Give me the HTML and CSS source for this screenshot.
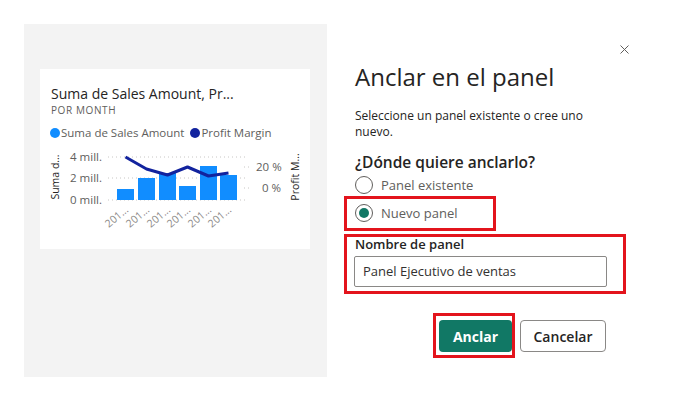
FILE: index.html
```html
<!DOCTYPE html>
<html lang="es">
<head>
<meta charset="utf-8">
<title>Anclar en el panel</title>
<link rel="stylesheet" href="styles.css">
</head>
<body>
<div class="page">
  <section class="preview">
    <div class="card">
      <div class="card-title">Suma de Sales Amount, Pr...</div>
      <div class="card-sub">POR MONTH</div>
      <div class="legend">
        <span class="dot dot-sales"></span><span class="legend-label">Suma de Sales Amount</span>
        <span class="dot dot-profit"></span><span class="legend-label">Profit Margin</span>
      </div>
      <svg class="chart" width="270" height="104" viewBox="0 0 270 104">
        <g class="grid">
          <line x1="68" y1="12" x2="208" y2="12"/>
          <line x1="68" y1="33" x2="208" y2="33"/>
          <line x1="68" y1="55" x2="208" y2="55"/>
          <line x1="204" y1="22" x2="212" y2="22"/>
          <line x1="204" y1="43" x2="212" y2="43"/>
        </g>
        <g class="axis-left">
          <text x="62" y="16">4 mill.</text>
          <text x="62" y="37">2 mill.</text>
          <text x="62" y="59">0 mill.</text>
        </g>
        <g class="axis-right">
          <text x="216" y="26">20 %</text>
          <text x="222" y="47">0 %</text>
        </g>
        <text class="axis-title" transform="translate(19 32) rotate(-90)">Suma d...</text>
        <text class="axis-title" transform="translate(259 32) rotate(-90)">Profit M...</text>
        <g class="bars">
          <rect x="77" y="44" width="17" height="11"/>
          <rect x="98" y="33" width="17" height="22"/>
          <rect x="119" y="28" width="17" height="27"/>
          <rect x="139" y="41" width="17" height="14"/>
          <rect x="160" y="21" width="17" height="34"/>
          <rect x="180" y="30" width="17" height="25"/>
        </g>
        <polyline class="line" points="85.5,12 106.5,24 127.5,30 147.5,22 168.5,31 188.5,28"/>
        <g class="xlabels">
          <text transform="translate(89 66) rotate(-40)">201...</text>
          <text transform="translate(110 66) rotate(-40)">201...</text>
          <text transform="translate(131 66) rotate(-40)">201...</text>
          <text transform="translate(151 66) rotate(-40)">201...</text>
          <text transform="translate(172 66) rotate(-40)">201...</text>
          <text transform="translate(192 66) rotate(-40)">201...</text>
        </g>
      </svg>
    </div>
  </section>

  <section class="dialog">
    <div class="close-row">
      <button class="close" aria-label="Cerrar">
        <svg width="9" height="9" viewBox="0 0 9 9"><path d="M0.5 0.5 L8.5 8.5 M8.5 0.5 L0.5 8.5"/></svg>
      </button>
    </div>
    <h1 class="title">Anclar en el panel</h1>
    <p class="desc">Seleccione un panel existente o cree uno nuevo.</p>
    <h2 class="question">¿Dónde quiere anclarlo?</h2>
    <label class="radio-row radio-first">
      <span class="radio"></span><span class="radio-label">Panel existente</span>
    </label>
    <div class="hl hl-radio">
      <label class="radio-row">
        <span class="radio checked"></span><span class="radio-label">Nuevo panel</span>
      </label>
    </div>
    <div class="hl hl-field">
      <div class="field-label">Nombre de panel</div>
      <div class="input">Panel Ejecutivo de ventas</div>
    </div>
    <div class="actions">
      <div class="hl hl-btn">
        <button class="btn primary">Anclar</button>
      </div>
      <button class="btn secondary">Cancelar</button>
    </div>
  </section>
</div>
</body>
</html>
```
FILE: styles.css
```css
* { box-sizing: border-box; }
html, body { margin: 0; padding: 0; background: #ffffff; }
body {
  font-family: "Open Sans", "Noto Sans", sans-serif;
  color: #252423;
  width: 673px;
  height: 400px;
  overflow: hidden;
}
.page {
  display: flex;
  align-items: flex-start;
}

/* preview */
.preview {
  margin: 24px 0 0 24px;
  width: 303px;
  height: 353px;
  background: #f3f3f3;
  flex: none;
}
.card {
  margin: 45px 0 0 16px;
  width: 270px;
  height: 180px;
  background: #ffffff;
  padding-top: 15px;
}
.card-title {
  padding-left: 11px;
  font-size: 14px;
  line-height: 19px;
  color: #252423;
  white-space: nowrap;
}
.card-sub {
  padding-left: 11px;
  font-size: 10px;
  line-height: 14px;
  letter-spacing: 0.6px;
  color: #605e5c;
}
.legend {
  margin-top: 8px;
  padding-left: 10px;
  display: flex;
  align-items: center;
  font-size: 11.5px;
  line-height: 16px;
  color: #605e5c;
  white-space: nowrap;
}
.dot {
  width: 10px;
  height: 10px;
  border-radius: 50%;
  margin-right: 1px;
  flex: none;
}
.dot-sales { background: #118dff; }
.dot-profit { background: #12239e; margin-left: 6px; }
.chart {
  display: block;
  margin-top: 4px;
}
.chart text { font-family: "Open Sans", "Noto Sans", sans-serif; }
.grid line {
  stroke: #c8c6c4;
  stroke-width: 1;
  stroke-dasharray: 1 3;
}
.axis-left text {
  font-size: 11.5px;
  fill: #605e5c;
  text-anchor: end;
}
.axis-right text {
  font-size: 11.5px;
  fill: #605e5c;
}
.axis-title {
  font-size: 10.5px;
  fill: #252423;
  text-anchor: middle;
}
.bars rect { fill: #118dff; }
.line {
  fill: none;
  stroke: #12239e;
  stroke-width: 3;
  stroke-linejoin: round;
}
.xlabels text {
  font-size: 10.5px;
  fill: #8a8886;
  text-anchor: end;
}

/* dialog */
.dialog {
  flex: 1;
  padding: 45px 44px 0 28px;
}
.close-row {
  display: flex;
  justify-content: flex-end;
}
.close {
  width: 9px;
  height: 9px;
  padding: 0;
  border: 0;
  background: transparent;
  display: block;
}
.close svg { display: block; }
.close path { stroke: #605e5c; stroke-width: 1; fill: none; }
.title {
  margin: 7px 0 0;
  font-size: 24px;
  font-weight: 400;
  line-height: 32px;
  color: #252423;
}
.desc {
  margin: 15px 0 0;
  width: 252px;
  font-size: 12px;
  line-height: 16px;
  color: #252423;
}
.question {
  margin: 11px 0 0;
  font-size: 15.5px;
  font-weight: 600;
  line-height: 22px;
  color: #252423;
}
.radio-row {
  display: flex;
  align-items: center;
  height: 20px;
  gap: 8px;
}
.radio-first { margin-top: 2px; }
.radio {
  width: 18px;
  height: 18px;
  border-radius: 50%;
  border: 1px solid #605e5c;
  flex: none;
  display: flex;
  align-items: center;
  justify-content: center;
}
.radio.checked::after {
  content: "";
  width: 10px;
  height: 10px;
  border-radius: 50%;
  background: #117865;
}
.radio-label {
  font-size: 13px;
  color: #605e5c;
}
.hl {
  border: 3px solid #e3141c;
}
.hl-radio {
  margin: 1px 0 0 -11px;
  width: 152px;
  padding: 4px 0 5px 8px;
}
.hl-field {
  margin: 3px 0 0 -11px;
  width: 282px;
  padding: 1px 0 4px 8px;
}
.field-label {
  font-size: 13px;
  font-weight: 600;
  line-height: 12px;
  color: #252423;
}
.input {
  margin: 6px 0 0 -1px;
  width: 253px;
  height: 31px;
  border: 1px solid #8a8886;
  border-radius: 2px;
  padding: 0 8px;
  font-size: 13px;
  line-height: 29px;
  color: #323130;
}
.actions {
  margin-top: 19px;
  width: 251px;
  display: flex;
  justify-content: flex-end;
  align-items: flex-start;
  gap: 5px;
}
.hl-btn {
  padding: 4px 0 3px 3px;
}
.btn {
  height: 32px;
  border-radius: 4px;
  font-family: "Open Sans", "Noto Sans", sans-serif;
  font-size: 14px;
  display: block;
  padding: 0;
}
.primary {
  width: 73px;
  background: #117865;
  border: 0;
  color: #ffffff;
  font-weight: 700;
}
.secondary {
  margin-top: 7px;
  width: 86px;
  background: #ffffff;
  border: 1px solid #8a8886;
  color: #252423;
  font-weight: 600;
}
```
